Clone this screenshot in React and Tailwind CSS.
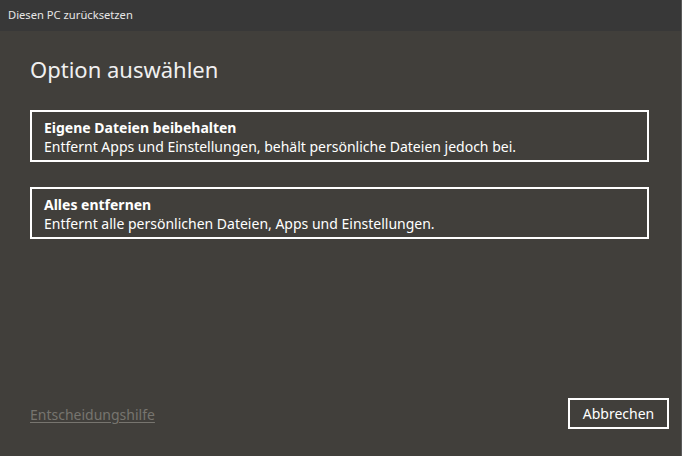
export default function App() {
  const font = { fontFamily: '"Noto Sans", "Open Sans", sans-serif' }
  return (
    <div
      className="w-[682px] h-[456px] bg-[#413f3b] text-white flex flex-col border-r border-[#5a5a5a] overflow-hidden"
      style={font}
    >
      <div className="h-[31px] bg-[#383838] flex items-center px-[8px] text-[11.2px] text-[#e6e6e6] shrink-0">
        Diesen PC zurücksetzen
      </div>
      <div className="flex-1 flex flex-col px-[30px] pt-[23px] pb-[26px]">
        <h1 className="text-[22px] leading-[30px] font-normal text-[#f0f0f0]">Option auswählen</h1>
        <div className="mt-[26px] flex flex-col gap-[25px] w-[619px]">
          <div className="border-2 border-white px-[12px] pt-[6px] pb-[4px] text-[14px] leading-[19px]">
            <div className="font-bold">Eigene Dateien beibehalten</div>
            <div>Entfernt Apps und Einstellungen, behält persönliche Dateien jedoch bei.</div>
          </div>
          <div className="border-2 border-white px-[12px] pt-[6px] pb-[4px] text-[14px] leading-[19px]">
            <div className="font-bold">Alles entfernen</div>
            <div>Entfernt alle persönlichen Dateien, Apps und Einstellungen.</div>
          </div>
        </div>
        <div className="mt-auto flex items-end justify-between">
          <a className="text-[14px] text-[#77756f] underline underline-offset-2 mb-[5px]">Entscheidungshilfe</a>
          <button className="w-[101px] h-[31px] border-2 border-white text-[14px] mr-[-18px] mb-[1px]">Abbrechen</button>
        </div>
      </div>
    </div>
  )
}
